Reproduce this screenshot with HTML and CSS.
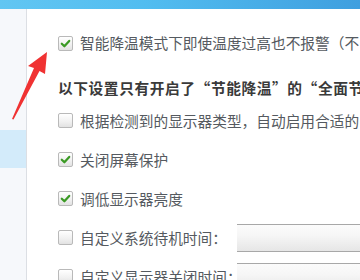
FILE: index.html
```html
<!DOCTYPE html>
<html lang="zh">
<head>
<meta charset="utf-8">
<link rel="stylesheet" href="styles.css">
</head>
<body>
<div class="topbar"></div>
<div class="frame">
  <aside class="sidebar">
    <div class="side-item selected"></div>
  </aside>
  <main class="content">
    <div class="row first">
      <span class="cb checked"><svg viewBox="0 0 14 14"><path d="M3 7.2 L5.8 10 L11 4.2" /></svg></span>
      <span class="label">智能降温模式下即使温度过高也不报警（不</span>
    </div>
    <div class="heading">以下设置只有开启了“节能降温”的“全面节</div>
    <div class="row">
      <span class="cb"></span>
      <span class="label">根据检测到的显示器类型，自动启用合适的</span>
    </div>
    <div class="row">
      <span class="cb checked"><svg viewBox="0 0 14 14"><path d="M3 7.2 L5.8 10 L11 4.2" /></svg></span>
      <span class="label">关闭屏幕保护</span>
    </div>
    <div class="row">
      <span class="cb checked"><svg viewBox="0 0 14 14"><path d="M3 7.2 L5.8 10 L11 4.2" /></svg></span>
      <span class="label">调低显示器亮度</span>
    </div>
    <div class="row">
      <span class="cb"></span>
      <span class="label fixed">自定义系统待机时间：</span>
      <span class="select"></span>
    </div>
    <div class="row">
      <span class="cb"></span>
      <span class="label fixed">自定义显示器关闭时间：</span>
      <span class="select"></span>
    </div>
  </main>
</div>
<svg class="arrow" width="60" height="130" viewBox="0 0 60 130">
  <polygon points="47,52 45,74 39.5,71 13.5,119.5 12,119 34,68 28,66" />
</svg>
</body>
</html>
```

FILE: styles.css
```css
html, body {
  margin: 0;
  padding: 0;
}
body {
  width: 360px;
  height: 280px;
  overflow: hidden;
  position: relative;
  background: #ffffff;
  font-family: "Noto Sans CJK SC", "Noto Sans", sans-serif;
}
.topbar {
  height: 9px;
  background: linear-gradient(to right, #62c6f2 0%, #52bdf0 40%, #3f9fdf 100%);
}
.frame {
  display: flex;
  height: 271px;
  overflow: hidden;
}
.sidebar {
  width: 26px;
  flex: none;
  background: #f6f8fb;
  border-right: 1px solid #dcdfe4;
  padding-top: 121px;
}
.side-item.selected {
  height: 38px;
  background: #d3ebfa;
}
.content {
  flex: 1;
  padding-top: 15px;
  padding-left: 31px;
  min-width: 0;
  overflow: hidden;
}
.row {
  height: 39px;
  display: flex;
  align-items: center;
  white-space: nowrap;
}
.row.first {
  height: 38px;
}
.heading {
  height: 26px;
  margin-top: 13px;
  line-height: 26px;
  font-size: 14.7px;
  letter-spacing: 0.6px;
  font-weight: bold;
  color: #3a3a3a;
  white-space: nowrap;
}
.cb {
  width: 13px;
  height: 13px;
  flex: none;
  border: 1px solid #b9b9b9;
  border-radius: 2px;
  background: linear-gradient(to bottom, #ffffff 0%, #f0f0f0 60%, #e2e2e2 100%);
  display: inline-flex;
  margin-right: 7px;
}
.cb svg {
  width: 13px;
  height: 13px;
}
.cb svg path {
  fill: none;
  stroke: #3b9a25;
  stroke-width: 2.4;
  stroke-linecap: round;
  stroke-linejoin: round;
}
.label {
  font-size: 14.7px;
  color: #555a60;
  line-height: 20px;
}
.label.fixed {
  width: 157px;
  flex: none;
}
.select {
  flex: none;
  width: 140px;
  height: 26px;
  border-top: 1px solid #a8a8a8;
  border-bottom: 1px solid #a8a8a8;
  background: linear-gradient(to bottom, #fbfbfb 0%, #f6f6f6 40%, #e6e6e6 100%);
}
.arrow {
  position: absolute;
  left: 0;
  top: 0;
}
.arrow polygon {
  fill: #f03232;
}
```
